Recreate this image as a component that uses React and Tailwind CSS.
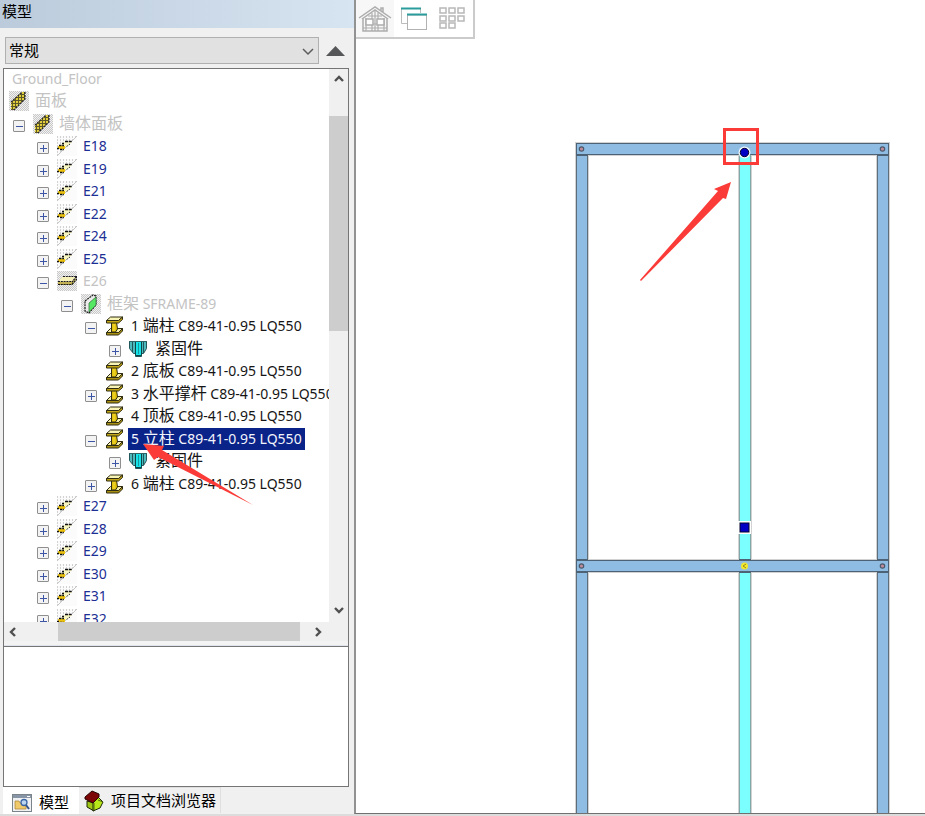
import React from "react";

const CJK = "font-['Noto_Sans','Noto_Sans_CJK_SC',sans-serif]";

const ROWS = [
  { level: -2, text: "Ground_Floor", tone: "muted" },
  { level: -1, icon: "panel", text: "面板", tone: "muted" },
  { level: 0, box: "-", icon: "panel", text: "墙体面板", tone: "muted" },
  { level: 1, box: "+", icon: "wall", text: "E18", tone: "link" },
  { level: 1, box: "+", icon: "wall", text: "E19", tone: "link" },
  { level: 1, box: "+", icon: "wall", text: "E21", tone: "link" },
  { level: 1, box: "+", icon: "wall", text: "E22", tone: "link" },
  { level: 1, box: "+", icon: "wall", text: "E24", tone: "link" },
  { level: 1, box: "+", icon: "wall", text: "E25", tone: "link" },
  { level: 1, box: "-", icon: "slab", text: "E26", tone: "muted" },
  { level: 2, box: "-", icon: "frame", text: "框架 SFRAME-89", tone: "muted" },
  { level: 3, box: "-", icon: "beam", text: "1 端柱 C89-41-0.95 LQ550" },
  { level: 4, box: "+", icon: "bolt", text: "紧固件" },
  { level: 3, icon: "beam", text: "2 底板 C89-41-0.95 LQ550" },
  { level: 3, box: "+", icon: "beam", text: "3 水平撑杆 C89-41-0.95 LQ550" },
  { level: 3, icon: "beam", text: "4 顶板 C89-41-0.95 LQ550" },
  { level: 3, box: "-", icon: "beam", text: "5 立柱 C89-41-0.95 LQ550", tone: "selected" },
  { level: 4, box: "+", icon: "bolt", text: "紧固件" },
  { level: 3, box: "+", icon: "beam", text: "6 端柱 C89-41-0.95 LQ550" },
  { level: 1, box: "+", icon: "wall", text: "E27", tone: "link" },
  { level: 1, box: "+", icon: "wall", text: "E28", tone: "link" },
  { level: 1, box: "+", icon: "wall", text: "E29", tone: "link" },
  { level: 1, box: "+", icon: "wall", text: "E30", tone: "link" },
  { level: 1, box: "+", icon: "wall", text: "E31", tone: "link" },
  { level: 1, box: "+", icon: "wall", text: "E32", tone: "link" },
];

const INDENT = {
  "-2": "pl-[5px]",
  "-1": "pl-[5px]",
  0: "pl-[9px]",
  1: "pl-[33px]",
  2: "pl-[57px]",
  3: "pl-[81px]",
  4: "pl-[105px]",
};

const TONE = {
  muted: "text-[#c3c3c3]",
  link: "text-[#1c2f94]",
  selected: "bg-[#0a2389] text-[#f2f4fb]",
  normal: "text-[#161616]",
};

function Patterns() {
  return (
    <svg className="absolute size-0" aria-hidden="true">
      <defs>
        <pattern id="dither" width="2" height="2" patternUnits="userSpaceOnUse">
          <rect width="2" height="2" fill="#f1f1f1" />
          <rect width="1" height="1" fill="#c8c8c8" />
          <rect x="1" y="1" width="1" height="1" fill="#c8c8c8" />
        </pattern>
        <pattern id="dots" width="3" height="3" patternUnits="userSpaceOnUse">
          <rect width="3" height="3" fill="#fbfbfb" />
          <rect width="1" height="2" fill="#d2d2d2" />
        </pattern>
        <pattern id="mesh" width="3" height="3" patternUnits="userSpaceOnUse">
          <rect width="3" height="3" fill="#5e5828" />
          <rect x="1" y="1" width="2" height="2" fill="#e2cf3c" />
        </pattern>
      </defs>
    </svg>
  );
}

function Icon({ name }) {
  return (
    <svg className="size-5 shrink-0" viewBox="0 0 20 20" aria-hidden="true">
      {name === "panel" && (
        <g>
          <rect width="20" height="20" fill="url(#dither)" />
          <path d="M2 11L13 1H16V8L5 19H2Z" fill="url(#mesh)" />
          <path d="M2 11L13 1M16 1V8L5 19" fill="none" stroke="#26262e" strokeWidth="1.2" strokeDasharray="2 1" />
        </g>
      )}
      {name === "wall" && (
        <g>
          <rect width="20" height="20" fill="#fbfbfb" />
          <path d="M0 0H20L0 20Z" fill="url(#dots)" />
          <path d="M20 0L0 20" stroke="#c6c6c6" />
          <path d="M7 6H15L9 11H2Z" fill="#f7f5c0" />
          <path d="M8 5.500H15" stroke="#111" strokeWidth="1.300" strokeDasharray="3 .7" />
          <path d="M13 8L9 11" stroke="#333" strokeDasharray="1.500 1.200" />
          <path d="M1 10H8V13H1Z" fill="#efc40f" />
          <path d="M2 9.500H7M5 7.500H7M0 12.500H2M3 13.500H7" stroke="#111" strokeWidth="1.300" strokeDasharray="2.500 .7" />
        </g>
      )}
      {name === "slab" && (
        <g>
          <rect width="20" height="20" fill="url(#dither)" />
          <path d="M5 6H19L15 11H1Z" fill="#f5f1b8" />
          <path d="M1 11H15L19 7V9L15 14H1Z" fill="#c2b254" />
          <path d="M6 5.500H20M1 10.500H15M1 13.500H15L20 8V5L15 11" fill="none" stroke="#16161c" strokeWidth="1.200" strokeDasharray="2 .8" />
        </g>
      )}
      {name === "frame" && (
        <g>
          <rect width="20" height="20" fill="url(#dither)" />
          <path d="M4 7L12 1L15 2V11L8 19L4 17Z" fill="#ececec" stroke="#1c1c1c" strokeWidth="1.200" strokeDasharray="2 .8" />
          <path d="M8 9L15 3V11L8 18Z" fill="#54e863" stroke="#3c7a44" strokeWidth=".8" />
        </g>
      )}
      {name === "beam" && (
        <g stroke="#2f2c12" strokeWidth="1" strokeLinejoin="round">
          <path d="M1.500 16.500L5.500 12.500H17.500L13.500 16.500Z" fill="#f4efaa" />
          <path d="M1.500 16.500H13.500L17.500 12.500V15L13.500 19H1.500Z" fill="#a98f12" />
          <path d="M6.500 6H11.500L12.500 13L10.500 16H6.500Z" fill="#e2c20a" />
          <path d="M9 8V15" stroke="#f3dc3a" strokeWidth="1" />
          <path d="M1.500 4.500L5.500 1H17.500L13.500 4.500Z" fill="#f7f3b4" />
          <path d="M1.500 4.500H13.500L17.500 1V3.500L13.500 7H1.500Z" fill="#c4a716" />
        </g>
      )}
      {name === "bolt" && (
        <g stroke="#23565a" strokeWidth="1">
          <path d="M.5 2.500H17.500V9.500L14.500 14.500H12.500V17.500H6.500V14.500H4.500L.5 9.500Z" fill="#4cb9bd" />
          <path d="M3.500 3V13M14.500 3V14" fill="none" />
          <path d="M6.500 3V16.500H12.500V3" fill="#14e4ea" stroke="#0d4549" />
          <path d="M9.500 4V15" stroke="#0f9aa0" />
          <path d="M0 2.500H18" stroke="#2d6467" />
        </g>
      )}
    </svg>
  );
}

/* Chinese glyphs are set two pixels larger than the Latin ones beside them. */
function Mixed({ text }) {
  return text.split(/([\u4e00-\u9fff]+)/).map((part, i) =>
    /[\u4e00-\u9fff]/.test(part) ? (
      <span key={i} className="text-[16px]">{part}</span>
    ) : (
      part
    )
  );
}

function Row({ row }) {
  const tone = row.tone || "normal";
  return (
    <li
      role="treeitem"
      aria-selected={tone === "selected"}
      className={`flex h-[22px] shrink-0 items-center first:h-[21px] not-first:odd:h-[23px] ${INDENT[row.level]}`}
    >
      {row.level >= 0 && (
        <span className="mr-2 flex w-3 shrink-0 pt-1">
          {row.box && (
            <button
              aria-label={row.box === "+" ? "展开" : "折叠"}
              className="flex size-3 items-center justify-center rounded-[1px] border border-[#8f8f8f] bg-[#f3f3f3]"
            >
              <svg className="size-2" viewBox="0 0 8 8" stroke="#3c55a5" strokeWidth="1" aria-hidden="true">
                <path d={row.box === "+" ? "M1 4.500H8M4.500 1V8" : "M1 4.500H8"} />
              </svg>
            </button>
          )}
        </span>
      )}
      {row.icon && <Icon name={row.icon} />}
      <span
        className={`h-[22px] px-[3px] text-[14px] whitespace-nowrap ${row.level === 1 ? "leading-[22px]" : "leading-[20px]"} ${row.icon ? "ml-[3px]" : ""} ${TONE[tone]}`}
      >
        <Mixed text={row.text} />
      </span>
    </li>
  );
}

function Chevron({ d, label, className }) {
  return (
    <button aria-label={label} className={`flex shrink-0 items-center justify-center ${className}`}>
      <svg className="size-3" viewBox="0 0 12 12" fill="none" stroke="#505050" strokeWidth="2.4" aria-hidden="true">
        <path d={d} />
      </svg>
    </button>
  );
}

function Tree() {
  return (
    <div className="relative flex h-[579px] flex-col border border-[#757575] bg-white">
      <div className="flex min-h-0 flex-1">
        <ul role="tree" aria-label="模型" className="flex min-w-0 flex-1 flex-col overflow-hidden">
          {ROWS.map((row, i) => (
            <Row key={i} row={row} />
          ))}
        </ul>
        <div className="flex w-[19px] flex-col bg-[#f0f0f0]">
          <Chevron label="向上" d="M2 8L6 4L10 8" className="h-5" />
          <div className="mt-[27px] h-[215px] bg-[#cdcdcd]" />
          <div className="flex-1" />
          <Chevron label="向下" d="M2 4L6 8L10 4" className="h-6" />
        </div>
      </div>
      <div className="flex h-[19px] bg-[#f0f0f0]">
        <Chevron label="向左" d="M8 2L4 6L8 10" className="w-[18px]" />
        <div className="ml-9 w-[242px] bg-[#cdcdcd]" />
        <Chevron label="向右" d="M4 2L8 6L4 10" className="ml-2 w-[19px]" />
      </div>
      <div className="h-[5px] border-b border-[#dfe4ec] bg-[#f3f3f3]" />
      <svg className="pointer-events-none absolute top-[374px] left-[138px] h-[64px] w-[112px]" viewBox="0 0 112 64" aria-hidden="true">
        <path d="M1 1L22 3L20 7L111 62L16 14L12 17Z" fill="#fb3b37" />
      </svg>
    </div>
  );
}

function Sidebar() {
  return (
    <aside className="flex w-[354px] shrink-0 flex-col bg-[#f0f0f0]">
      <h1 className="h-7 bg-gradient-to-r from-[#bccbdb] to-[#d7e5f2] pl-0.5 text-[15px] leading-[22px] text-black">
        模型
      </h1>
      <div className="mt-[9px] flex items-center gap-[7px] pl-[5px]">
        <label className="relative w-[314px]">
          <span className="sr-only">视图</span>
          <select className="block h-[27px] w-full appearance-none border border-[#b0b0b0] bg-[#e1e1e1] pl-[3px] text-[15px] leading-[25px] text-black">
            <option>常规</option>
          </select>
          <svg className="pointer-events-none absolute top-2 right-[5px] size-3" viewBox="0 0 12 12" fill="none" stroke="#5c5c5c" strokeWidth="1.5" aria-hidden="true">
            <path d="M1 4L6 9L11 4" />
          </svg>
        </label>
        <button aria-label="收起">
          <svg className="h-[10px] w-[19px]" viewBox="0 0 19 10" aria-hidden="true">
            <path d="M0 10L9.500 0L19 10Z" fill="#555759" />
          </svg>
        </button>
      </div>
      <div className="mt-1 flex min-h-0 flex-1 flex-col pr-[5px] pl-[3px]">
        <Tree />
        <div className="flex-1 border-x border-b border-[#757575] bg-white" />
      </div>
      <div role="tablist" className="flex h-[27px] items-start pl-[3px] text-[15px] text-black">
        <button role="tab" aria-selected="true" className="flex h-[27px] w-[76px] items-center gap-[7px] bg-white pt-1 pl-[9px]">
          <svg className="h-[18px] w-5" viewBox="0 0 20 18" aria-hidden="true">
            <rect x=".5" y=".5" width="19" height="17" fill="#f0f1f3" stroke="#7b838b" />
            <path d="M1 1H19V4H1Z" fill="#8795a6" />
            <path d="M15 2.500H18" stroke="#fff" />
            <path d="M3 7H7L8 9H14V15H3Z" fill="#f0c96a" stroke="#b08c38" strokeWidth=".8" />
            <circle cx="12" cy="8.500" r="3" fill="#bcd6f1" stroke="#3c67a5" strokeWidth="1.300" />
            <path d="M14 11L17 15" stroke="#36558a" strokeWidth="2" />
          </svg>
          模型
        </button>
        <button role="tab" aria-selected="false" className="flex h-[26px] w-[142px] items-center gap-[7px] border-t border-r border-[#dfdfdf] pl-[5px]">
          <svg className="h-[22px] w-5" viewBox="0 0 20 22" aria-hidden="true">
            <path d="M3 11L10 13V21L3 17Z" fill="#9fc816" stroke="#1d2608" />
            <path d="M9 13L14 7L19 12L16 18L9 21Z" fill="#b8e81a" stroke="#1d2608" />
            <path d="M10 13V20M14 10L19 12" stroke="#4b6510" />
            <path d="M8 1L15 4V7L9 13L1 9V7Z" fill="#7c0505" stroke="#2a0303" />
          </svg>
          项目文档浏览器
        </button>
      </div>
    </aside>
  );
}

function Toolbar() {
  return (
    <div role="toolbar" className="absolute top-0 left-0 flex h-[39px] w-[119px] border-r-2 border-b-2 border-[#cbcbcb] bg-white">
      <button aria-label="房屋" className="flex w-[38px] justify-center bg-[#f7f7f7] pt-[5px]">
        <svg className="h-7 w-[34px]" viewBox="0 0 34 28" fill="none" stroke="#adadad" strokeWidth="1.500" aria-hidden="true">
          <path d="M1 13L17 2L33 13M4 14L17 5L30 14M5 13V26H29V13M23 6V3H25V8" />
          <path d="M5 23H29M8 13V26M26 13V26M14 8V26M20 8V26M17 6V26M10 11H24M11 19H23" strokeWidth="1.2" />
          <rect x="8" y="14" width="7" height="6" fill="#fff" />
          <rect x="19" y="14" width="7" height="6" fill="#fff" />
        </svg>
      </button>
      <button aria-label="窗口" className="flex w-[39px] justify-center pt-1.5">
        <svg className="h-[26px] w-7" viewBox="0 0 28 26" fill="none" aria-hidden="true">
          <path d="M1.500 3V17.500H7M20.500 3V7" stroke="#bcbcbc" />
          <path d="M1 2.500H21" stroke="#2b9c9c" strokeWidth="2" />
          <rect x="7.500" y="9" width="19" height="14.500" fill="#fff" stroke="#b2b2b2" />
          <path d="M7 8.500H27" stroke="#2b9c9c" strokeWidth="2" />
        </svg>
      </button>
      <button aria-label="平铺" className="flex flex-1 justify-center pt-[7px] pr-[2px]">
        <svg className="h-6 w-[26px]" viewBox="0 0 26 24" fill="none" stroke="#b8b8b8" strokeWidth="1.500" aria-hidden="true">
          <path d="M1 1H7V6H1ZM10 1H16V6H10ZM19 1H25V6H19ZM1 9H7V14H1ZM10 9H16V14H10ZM19 9H25V14H19ZM1 16H7V21H1ZM10 16H16V21H10Z" />
        </svg>
      </button>
    </div>
  );
}

function Post({ x, y, height, fill, stroke }) {
  return (
    <g>
      <rect x={x - 1} y={y} width="14" height={height} fill="#d2d2d2" />
      <rect x={x + 0.5} y={y + 0.5} width="11" height={height} fill={fill} stroke={stroke} />
    </g>
  );
}

function RailShadow({ y }) {
  return <rect x="219" y={y - 1} width="315" height="14" fill="#d2d2d2" />;
}

function Rail({ y }) {
  return (
    <g>
      <rect x="220.500" y={y + 0.5} width="312" height="11" fill="#8fbce2" stroke="#4d6274" />
      {[225.5, 526.5].map((x) => (
        <circle key={x} cx={x} cy={y + 6} r="2.2" fill="#c08c9c" stroke="#4b5a6c" strokeWidth="1.2" />
      ))}
    </g>
  );
}

function Viewport() {
  return (
    <main className="relative min-w-0 flex-1 overflow-hidden border-b border-l-2 border-b-[#707070] border-l-[#929292] bg-white">
      <svg className="block h-full w-full" role="img" aria-label="E26">
        <RailShadow y={143} />
        <RailShadow y={560} />
        <Post x={220} y={155} height={2000} fill="#8fbce2" stroke="#5d6d7a" />
        <Post x={521} y={155} height={2000} fill="#8fbce2" stroke="#5d6d7a" />
        <Post x={383} y={155} height={2000} fill="#7bffff" stroke="#7fa8a8" />
        <Rail y={143} />
        <Rail y={560} />
        <path d="M220 155.500H232M521 155.500H533M220 559.500H232M521 559.500H533M383 559.500H395M220 572.500H232M521 572.500H533M383 572.500H395" stroke="#4d6274" />
        <circle cx="388.500" cy="566" r="3.500" fill="#f2e92c" />
        <path d="M390 564L387 566L390 568" fill="none" stroke="#9a8a20" />
        <circle cx="388.500" cy="152.500" r="6" fill="#eef6fb" />
        <circle cx="388.500" cy="152.500" r="4.200" fill="#0000c4" stroke="#05052c" />
        <rect x="382" y="521" width="13" height="13" fill="#fff" />
        <rect x="384" y="523" width="9" height="9" fill="#0000c4" stroke="#05052c" />
        <rect x="368.500" y="129.500" width="33" height="34" fill="none" stroke="#fb3b37" strokeWidth="3" />
        <path d="M375 182L358 189L362 191L284 280L285 281L367 198L370 199Z" fill="#fb3b37" />
      </svg>
      <Toolbar />
    </main>
  );
}

export default function App() {
  return (
    <div className={`flex h-screen min-h-[720px] flex-col overflow-hidden bg-[#f0f0f0] ${CJK}`}>
      <Patterns />
      <div className="flex min-h-0 flex-1">
        <Sidebar />
        <Viewport />
      </div>
      <div className="h-0.5 shrink-0 bg-[#dcdcdc]" />
    </div>
  );
}
